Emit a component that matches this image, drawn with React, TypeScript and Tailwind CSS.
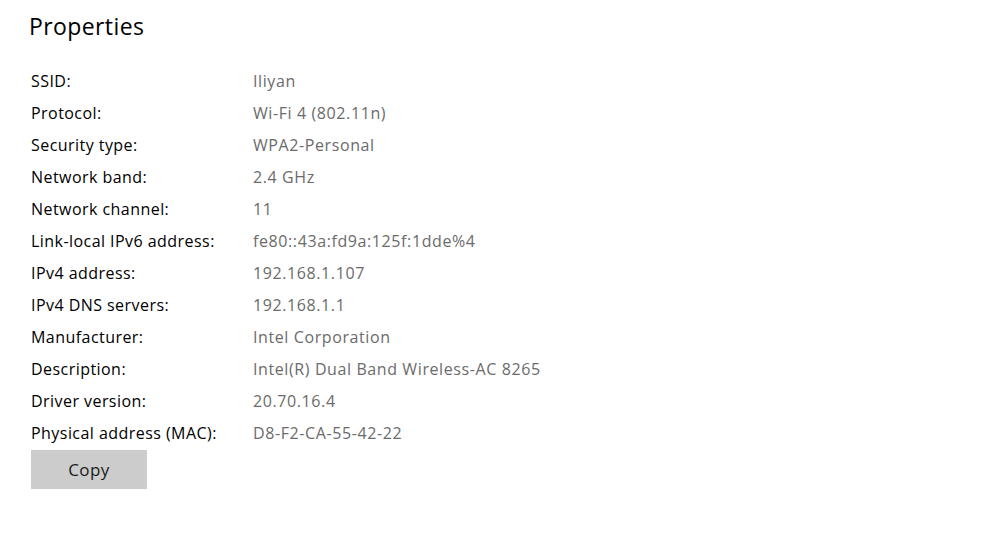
import React from "react";

const rows: [string, string][] = [
  ["SSID:", "Iliyan"],
  ["Protocol:", "Wi-Fi 4 (802.11n)"],
  ["Security type:", "WPA2-Personal"],
  ["Network band:", "2.4 GHz"],
  ["Network channel:", "11"],
  ["Link-local IPv6 address:", "fe80::43a:fd9a:125f:1dde%4"],
  ["IPv4 address:", "192.168.1.107"],
  ["IPv4 DNS servers:", "192.168.1.1"],
  ["Manufacturer:", "Intel Corporation"],
  ["Description:", "Intel(R) Dual Band Wireless-AC 8265"],
  ["Driver version:", "20.70.16.4"],
  ["Physical address (MAC):", "D8-F2-CA-55-42-22"],
];

export default function App() {
  return (
    <div className="w-[1000px] h-[539px] bg-white overflow-hidden font-['Open_Sans',sans-serif]">
      <div className="pl-[29px] pt-[10px]">
        <h1 className="text-[23px] leading-[32px] tracking-[0.4px] text-black font-normal">Properties</h1>
        <div className="mt-[23px] flex flex-col pl-[2px]">
          {rows.map(([k, v]) => (
            <div key={k} className="flex h-[32px] items-center text-[16px]">
              <div className="w-[222px] text-black tracking-[0.45px]">{k}</div>
              <div className="text-[#6b6b6b] tracking-[0.6px]">{v}</div>
            </div>
          ))}
        </div>
        <button className="mt-[1px] ml-[2px] w-[116px] h-[39px] bg-[#cccccc] text-[#1a1a1a] text-[17px] tracking-[0.4px]">
          Copy
        </button>
      </div>
    </div>
  );
}
